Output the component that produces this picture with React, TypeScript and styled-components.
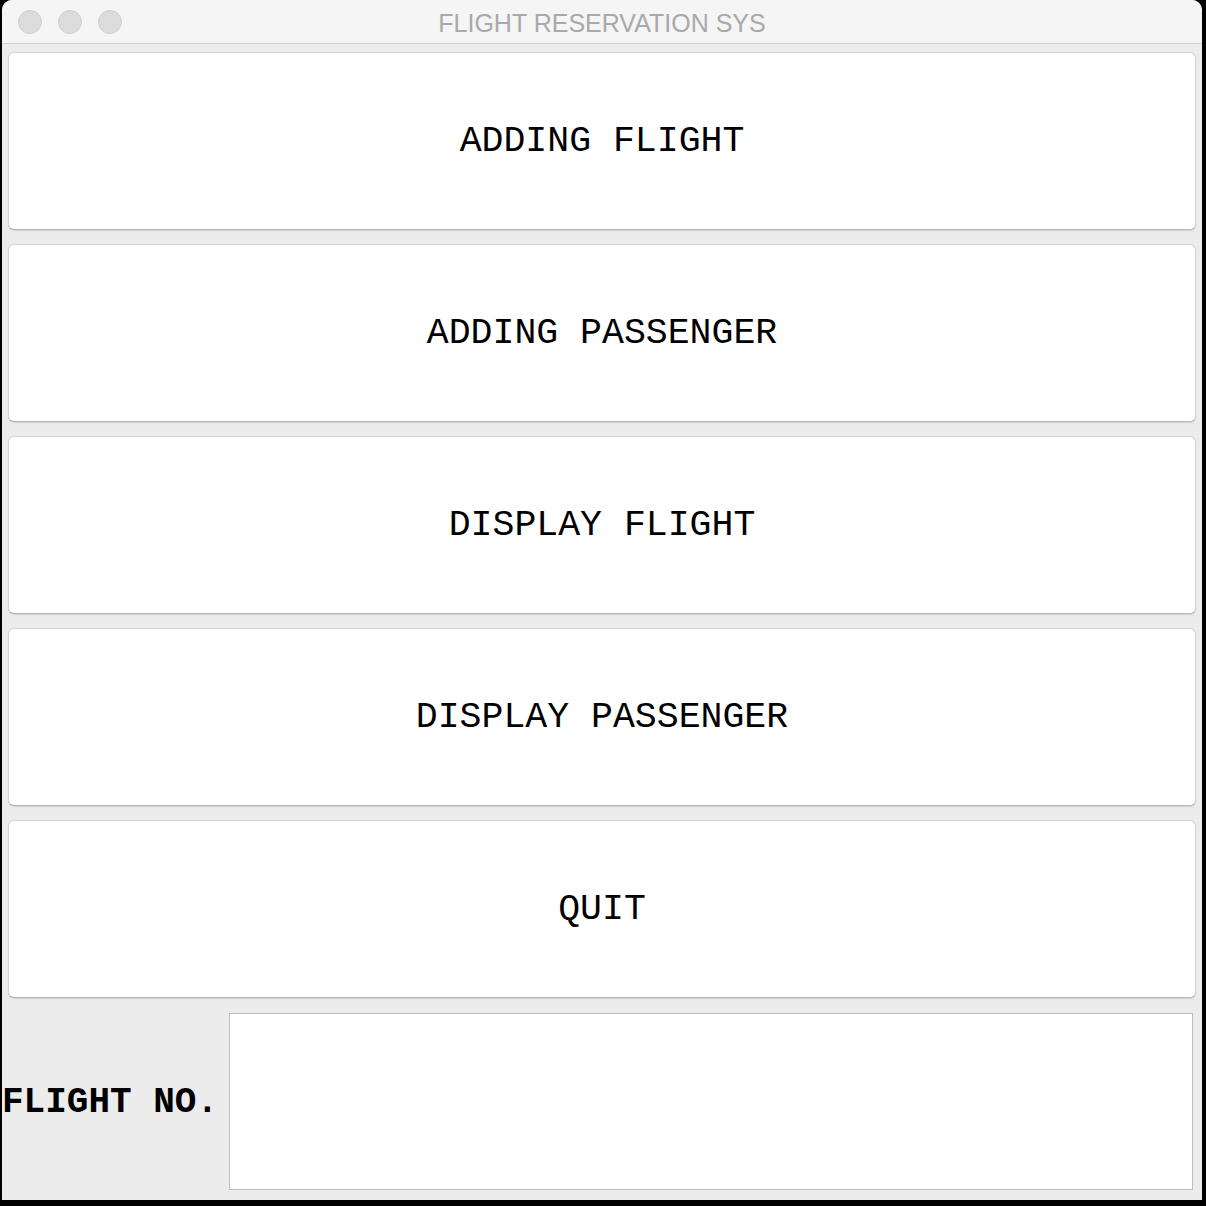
import * as React from "react"
import styled, { createGlobalStyle } from "styled-components"

const GlobalStyle = createGlobalStyle`
    html, body {
        margin: 0;
        padding: 0;
        background: #000000;
        width: 1206px;
        height: 1206px;
        overflow: hidden;
    }
`

const mono = `"Courier New", "Nimbus Mono PS", "Nimbus Mono L", FreeMono, "Liberation Mono", monospace`

const Desktop = styled.div`
    width: 1206px;
    height: 1206px;
    background: #000000;
    display: flex;
    padding-left: 2px;
    box-sizing: border-box;
`

const Window = styled.div`
    width: 1200px;
    height: 1200px;
    background: #ececec;
    border-radius: 10px 10px 0 0;
    overflow: hidden;
    display: flex;
    flex-direction: column;
`

const TitleBar = styled.div`
    position: relative;
    height: 43px;
    flex: 0 0 43px;
    background: #f5f5f5;
    border-bottom: 1px solid #d0d0d0;
    display: flex;
    align-items: center;
    justify-content: center;
`

const Lights = styled.div`
    position: absolute;
    left: 16px;
    top: 10px;
    display: flex;
    gap: 16px;
`

const Light = styled.div`
    width: 24px;
    height: 24px;
    border-radius: 50%;
    background: #dcdcdc;
    border: 1px solid #cfcfcf;
    box-sizing: border-box;
`

const Title = styled.div`
    font-family: "Liberation Sans", Arial, sans-serif;
    font-size: 25px;
    color: #a9a9a9;
    margin-top: 3px;
`

const Content = styled.div`
    flex: 1;
    display: flex;
    flex-direction: column;
    gap: 14px;
    padding: 8px 6px 10px 6px;
`

const MenuButton = styled.button`
    height: 178px;
    flex: 0 0 178px;
    background: #ffffff;
    border: 1px solid #d2d2d2;
    border-bottom-color: #b8b8b8;
    border-radius: 6px;
    box-shadow: 0 1px 1px rgba(0, 0, 0, 0.12);
    font-family: ${mono};
    font-size: 36.5px;
    color: #000000;
    padding: 0;
    cursor: pointer;
`

const InputRow = styled.div`
    flex: 1;
    display: flex;
    align-items: stretch;
    margin-top: 1px;
    margin-left: -6px;
    margin-right: 3px;
`

const Label = styled.div`
    width: 227px;
    flex: 0 0 227px;
    display: flex;
    align-items: center;
    font-family: ${mono};
    font-weight: bold;
    font-size: 36px;
    color: #000000;
    padding-top: 2px;
`

const Field = styled.input`
    flex: 1;
    background: #ffffff;
    border: 1px solid #bdbdbd;
    outline: none;
    margin: 0;
    padding: 0 6px;
    font-family: ${mono};
    font-size: 30px;
`

const items = ["ADDING FLIGHT", "ADDING PASSENGER", "DISPLAY FLIGHT", "DISPLAY PASSENGER", "QUIT"]

export default function App(): JSX.Element {
    return (
        <>
            <GlobalStyle />
            <Desktop>
                <Window>
                    <TitleBar>
                        <Lights>
                            <Light />
                            <Light />
                            <Light />
                        </Lights>
                        <Title>FLIGHT RESERVATION SYS</Title>
                    </TitleBar>
                    <Content>
                        {items.map(item => (
                            <MenuButton key={item}>{item}</MenuButton>
                        ))}
                        <InputRow>
                            <Label>FLIGHT NO.</Label>
                            <Field type="text" />
                        </InputRow>
                    </Content>
                </Window>
            </Desktop>
        </>
    )
}
